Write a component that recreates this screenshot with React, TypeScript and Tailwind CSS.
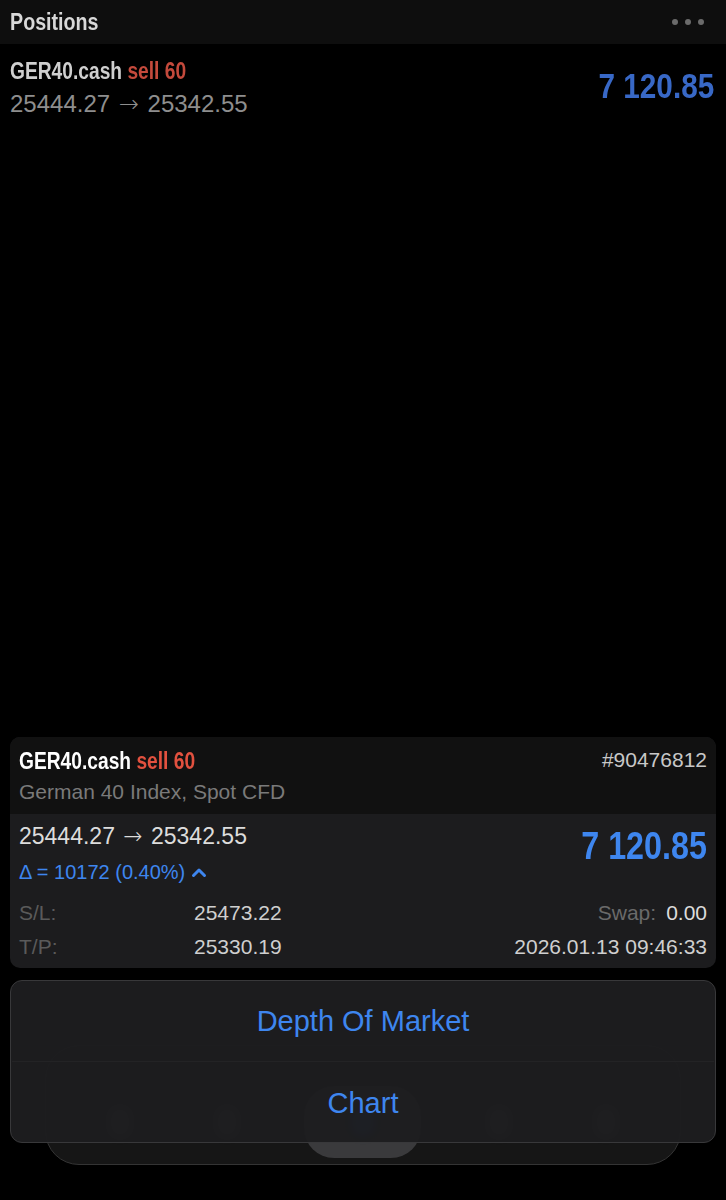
const sans = "font-['Liberation_Sans',Arial,sans-serif]";
// no condensed face is installed, so squeeze the bold face
const narrowL = "inline-block font-bold scale-x-[0.8] origin-left whitespace-nowrap";
const narrowR = "inline-block font-bold scale-x-[0.85] origin-right whitespace-nowrap";

function Arrow() {
  return <span className="font-['DejaVu_Sans',sans-serif] font-light mx-[2px]">→</span>;
}

function TabBarPeek() {
  // tab bar sitting behind the action menu, only its lower edge shows
  const slots = [0, 1, 2, 3, 4];
  return (
    <div className="absolute left-[35px] right-[35px] bottom-[-22px] h-[120px] rounded-[34px] bg-[#161616] border border-[#343434] flex items-end justify-around px-[20px] pb-[6px]">
      {slots.map((i) => (
        <div
          key={i}
          className={
            i === 2
              ? "w-[117px] h-[72px] rounded-[30px] bg-[#3a3a3c] flex items-center justify-center"
              : "w-[60px] h-[72px] flex items-center justify-center"
          }
        >
          <div className={i === 2 ? "w-[26px] h-[30px] rounded-full bg-[#2b5cb0] blur-[3px]" : "w-[22px] h-[30px] rounded-full bg-[#444] blur-[3px]"} />
        </div>
      ))}
    </div>
  );
}

export default function App() {
  return (
    <main className={`relative w-[726px] h-[1200px] bg-black flex flex-col overflow-hidden ${sans}`}>
      {/* header */}
      <header className="h-[44px] bg-[#0e0e0e] flex items-center justify-between pl-[10px] pr-[22px]">
        <h1 className={`${narrowL} text-[24px] text-[#d8d8d8] scale-x-[0.82]`}>Positions</h1>
        <div className="flex gap-[7px]">
          <span className="w-[6px] h-[6px] rounded-full bg-[#6b6b6b]" />
          <span className="w-[6px] h-[6px] rounded-full bg-[#6b6b6b]" />
          <span className="w-[6px] h-[6px] rounded-full bg-[#6b6b6b]" />
        </div>
      </header>

      {/* position row */}
      <div className="flex justify-between items-start pl-[10px] pr-[12px] pt-[13px]">
        <div className="flex flex-col">
          <div className={`${narrowL} text-[24px] leading-[28px]`}>
            <span className="text-[#cfcfcf]">GER40.cash</span>{" "}
            <span className="text-[#c44a3c]">sell 60</span>
          </div>
          <div className="text-[24px] leading-[30px] text-[#8e8e8e] mt-[4px]">
            25444.27 <Arrow /> 25342.55
          </div>
        </div>
        <div className={`${narrowR} text-[35px] text-[#3868c6] leading-[40px] mt-[9px]`}>7 120.85</div>
      </div>

      <div className="flex-1" />

      {/* bottom sheet */}
      <div className="relative px-[10px] pb-[57px]">
        <section className="rounded-[10px] overflow-hidden bg-[#1c1c1e]">
          <div className="bg-[#111111] h-[77px] px-[9px] pt-[9px] flex justify-between">
            <div className="flex flex-col">
              <div className={`${narrowL} text-[24px] leading-[30px]`}>
                <span className="text-white">GER40.cash</span>{" "}
                <span className="text-[#e2513f]">sell 60</span>
              </div>
              <div className="text-[21px] leading-[26px] text-[#7a7a7a] mt-[3px]">German 40 Index, Spot CFD</div>
            </div>
            <div className="text-[21px] leading-[26px] text-[#c8c8c8] pt-[1px]">#90476812</div>
          </div>
          <div className="px-[9px] pt-[8px] pb-[8px]">
            <div className="flex justify-between items-start">
              <div className="flex flex-col">
                <div className="text-[23px] leading-[28px] text-[#dcdcdc]">
                  25444.27 <Arrow /> 25342.55
                </div>
                <div className="flex items-center gap-[6px] text-[20px] leading-[24px] text-[#3e86ef] mt-[10px]">
                  <span>Δ = 10172 (0.40%)</span>
                  <svg width="16" height="12" viewBox="0 0 16 12" fill="none">
                    <path d="M2.5 9.5 L8 4 L13.5 9.5" stroke="#3e86ef" strokeWidth="3" strokeLinecap="round" strokeLinejoin="round" />
                  </svg>
                </div>
              </div>
              <div className={`${narrowR} text-[38px] text-[#3e86ef] leading-[40px] mt-[4px]`}>7 120.85</div>
            </div>
            <div className="grid grid-cols-[175px_1fr_auto] gap-y-[8px] text-[21px] leading-[26px] mt-[16px]">
              <span className="text-[#5a5a5a]">S/L:</span>
              <span className="text-[#cfcfcf]">25473.22</span>
              <span className="text-right">
                <span className="text-[#6a6a6a]">Swap:</span>
                <span className="text-[#dcdcdc] ml-[10px]">0.00</span>
              </span>
              <span className="text-[#5a5a5a]">T/P:</span>
              <span className="text-[#cfcfcf]">25330.19</span>
              <span className="text-[#cfcfcf] text-right">2026.01.13 09:46:33</span>
            </div>
          </div>
        </section>

        <div className="relative mt-[12px] h-[163px]">
          <TabBarPeek />
          <div className="relative h-full rounded-[12px] bg-[#1d1d1f]/[0.97] border border-[#38383a] flex flex-col">
            <button className="h-[80px] text-[29px] text-[#3e86ef] flex items-center justify-center pt-[2px]">Depth Of Market</button>
            <div className="h-px mx-[1px] bg-[#232325]" />
            <button className="flex-1 text-[29px] text-[#3e86ef] flex items-center justify-center pt-[4px]">Chart</button>
          </div>
        </div>
      </div>
    </main>
  );
}
